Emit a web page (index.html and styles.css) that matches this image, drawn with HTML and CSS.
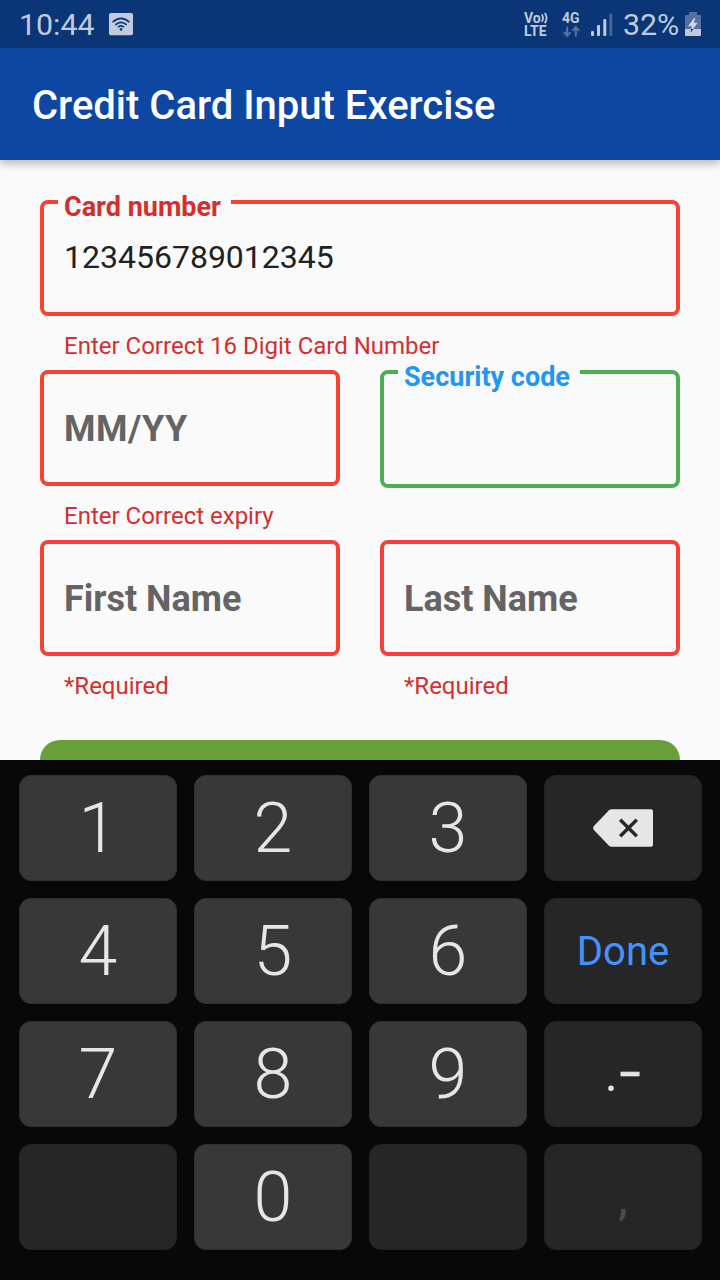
FILE: index.html
```html
<!DOCTYPE html>
<html lang="en">
<head>
<meta charset="utf-8">
<title>Credit Card Input Exercise</title>
<link rel="stylesheet" href="styles.css">
</head>
<body>
<div class="screen">
  <div class="status-bar">
    <span class="clock">10:44</span>
    <svg class="wifi" width="24" height="23" viewBox="0 0 24 23">
      <rect width="24" height="22.3" rx="1.8" fill="#c1cbdd"/>
      <g fill="none" stroke="#0a3577" stroke-width="1.6">
        <path d="M3.6 9.2Q12 1.6 20.4 9.2"/><path d="M6.4 11.9Q12 6.7 17.6 11.9"/><path d="M9 14.2Q12 11.6 15 14.2"/>
      </g>
      <circle cx="12" cy="16.4" r="1.3" fill="#0a3577"/>
    </svg>
    <div class="volte"><span>Vo<svg width="8" height="12" viewBox="0 0 8 12"><path d="M.8 2.5Q3.2 6 .8 9.8M3.8 1Q7.4 6 3.8 11.3" fill="none" stroke="#c1cbdd" stroke-width="1.8"/></svg></span><span>LTE</span></div>
    <div class="network">
      <span>4G</span>
      <svg width="17" height="12" viewBox="0 0 17 12"><path d="M4.2 0.5V9.5M0.9 6.3L4.2 9.8L7.5 6.3M12.8 10.5V1.5M9.5 4.7L12.8 1.2L16.1 4.7" fill="none" stroke="#5872a0" stroke-width="2"/></svg>
    </div>
    <svg class="signal" width="22" height="24" viewBox="0 0 22 24">
      <g fill="#c1cbdd"><rect y="18" width="3" height="5" rx="1"/><rect x="6" y="12" width="3" height="11" rx="1"/><rect x="12.3" y="6" width="3" height="17" rx="1"/></g>
      <rect x="18.3" y="0.5" width="3" height="22.5" rx="1" fill="#48659a"/>
    </svg>
    <span class="percent">32%</span>
    <svg class="battery" width="16" height="24" viewBox="0 0 16 24">
      <path d="M4 0H12V3H15Q16 3 16 4V17H0V4Q0 3 1 3H4Z" fill="#5571a1"/>
      <path d="M0 17H16V23Q16 24 15 24H1Q0 24 0 23Z" fill="#c1cbdd"/>
      <path d="M9.2 6L3 14.2H7.2L6.3 17H8L12.7 10.8H8.8L10.3 6Z" fill="#d2d9e6"/>
      <path d="M6.3 17H8.3L5.5 20.8Z" fill="#071b3d"/>
    </svg>
  </div>
  <header class="app-bar"><h1>Credit Card Input Exercise</h1></header>
  <main class="form">
    <div class="field wide">
      <div class="box"><label class="floating">Card number</label><span class="value">123456789012345</span></div>
      <p class="error">Enter Correct 16 Digit Card Number</p>
    </div>
    <div class="field">
      <div class="box"><span class="hint date">MM/YY</span></div>
      <p class="error">Enter Correct expiry</p>
    </div>
    <div class="field">
      <div class="box focused"><label class="floating">Security code</label></div>
    </div>
    <div class="field">
      <div class="box"><span class="hint">First Name</span></div>
      <p class="error">*Required</p>
    </div>
    <div class="field">
      <div class="box"><span class="hint">Last Name</span></div>
      <p class="error">*Required</p>
    </div>
    <div class="submit wide"></div>
  </main>
  <div class="keyboard">
    <div class="key">1</div><div class="key">2</div><div class="key">3</div>
    <div class="key dark"><svg class="backspace" width="60" height="38" viewBox="0 0 60 38">
      <path d="M16 1.2Q17 .2 18.5 .2H58Q60 .2 60 2.2V35.8Q60 37.8 58 37.8H18.5Q17 37.8 16 36.8L.9 21Q-.7 19 .9 17Z" fill="#e6e6e6"/>
      <path d="M27.2 10.7L43.8 27.3M43.8 10.7L27.2 27.3" stroke="#262626" stroke-width="3.4"/>
    </svg></div>
    <div class="key">4</div><div class="key">5</div><div class="key">6</div><div class="key dark done">Done</div>
    <div class="key">7</div><div class="key">8</div><div class="key">9</div>
    <div class="key dark symbols"><span class="dot">.</span><span class="dash">-</span></div>
    <div class="key dark"></div><div class="key">0</div><div class="key dark"></div><div class="key dark comma">,</div>
  </div>
</div>
</body>
</html>
```
FILE: styles.css
```css
* { box-sizing: border-box; }
body { margin: 0; font-family: Roboto, "Liberation Sans", sans-serif; background: #fafafa; }
h1, p { margin: 0; }
svg { display: block; flex: none; }

.screen { width: 720px; height: 1280px; display: flex; flex-direction: column; overflow: hidden; }

.status-bar { height: 48px; flex: none; display: flex; align-items: flex-start; padding: 12px 19px 0; background: #0a3577; color: #c1cbdd; }
.clock, .percent { font-size: 30.3px; line-height: 26px; }
.clock { width: 90px; }
.wifi { margin-top: 1px; }
.volte { width: 30px; margin-left: auto; font-size: 14px; font-weight: 700; line-height: 13px; }
.volte span { display: flex; height: 13px; }
.volte span + span { height: 13px; line-height: 13px; }
.network { width: 19px; margin: 0 10px 0 8px; font-size: 14px; font-weight: 700; line-height: 13px; }
.network span { display: block; }
.network svg { margin: 1px 0 0 1px; }
.signal { margin: 1px 10px 0 0; }
.percent { width: 62px; }

.app-bar { position: relative; height: 112px; flex: none; display: flex; align-items: center; padding: 4px 32px 0; background: #0d47a1; box-shadow: 0 4px 8px rgba(0, 0, 0, .25); }
.app-bar h1 { color: #fff; font-size: 40px; font-weight: 500; line-height: 48px; white-space: nowrap; }

.form { height: 600px; flex: none; overflow: hidden; display: grid; grid-template-columns: 300px 300px; grid-template-rows: 170px 170px 200px 60px; column-gap: 40px; padding: 40px 40px 0; }
.wide { grid-column: 1 / -1; }
.box { position: relative; height: 116px; display: flex; align-items: center; padding: 0 20px; border: 4px solid #f44336; border-radius: 8px; }
.focused { height: 118px; border-color: #4caf50; }
.floating { position: absolute; left: 14px; top: -13px; padding: 0 10px 0 6px; background: #fafafa; color: #d32f2f; font-size: 27px; font-weight: 700; line-height: 32px; white-space: nowrap; }
.focused .floating { color: #2196f3; }
.value { padding-bottom: 2px; font-size: 32px; line-height: 38px; color: #212121; }
.hint { padding-top: 2px; font-size: 36px; font-weight: 700; line-height: 42px; color: #646464; }
.date { letter-spacing: .5px; }
.error { padding: 16px 24px 0; color: #d32f2f; font-size: 24px; line-height: 28px; white-space: nowrap; }
.submit { height: 60px; border-radius: 20px; background: #689f38; }

.keyboard { flex: 1; display: grid; grid-template-columns: repeat(4, 158px); grid-auto-rows: 106px; gap: 17px; padding: 15px 0 0 19px; background: #080808; }
.key { display: flex; align-items: center; justify-content: center; border: 1px solid #303030; border-radius: 12px; background: #383838; color: #e6e6e6; font-size: 70px; font-weight: 300; line-height: 82px; }
.dark { background: #262626; border-color: #222; }
.done { padding-top: 2px; color: #4393ff; font-size: 40px; font-weight: 400; line-height: 48px; }
.symbols { gap: 3px; padding-left: 1px; font-weight: 400; }
.dot { font-family: Lato, sans-serif; font-size: 44px; }
.dash { padding-bottom: 3px; font-size: 78px; font-weight: 300; -webkit-text-stroke: .5px #e6e6e6; }
.comma { color: #4c4c4c; font-size: 50px; font-weight: 400; }
```
